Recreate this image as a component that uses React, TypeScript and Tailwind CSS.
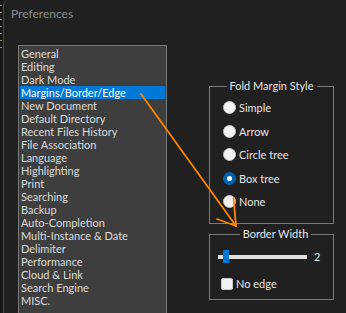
import React from 'react';

const PAGES = [
  'General',
  'Editing',
  'Dark Mode',
  'Margins/Border/Edge',
  'New Document',
  'Default Directory',
  'Recent Files History',
  'File Association',
  'Language',
  'Highlighting',
  'Print',
  'Searching',
  'Backup',
  'Auto-Completion',
  'Multi-Instance & Date',
  'Delimiter',
  'Performance',
  'Cloud & Link',
  'Search Engine',
  'MISC.',
];

const FOLD_STYLES = ['Simple', 'Arrow', 'Circle tree', 'Box tree', 'None'];

const Radio: React.FC<{ label: string; checked?: boolean }> = ({ label, checked }) => (
  <label className="flex items-center h-[13px] gap-[3px]">
    {checked ? (
      <span className="w-[13px] h-[13px] rounded-full bg-[#0063b1] flex items-center justify-center">
        <span className="w-[5px] h-[5px] rounded-full bg-white" />
      </span>
    ) : (
      <span className="w-[13px] h-[13px] rounded-full bg-[#f2f2f2] border border-[#c8c8c8]" />
    )}
    <span className="leading-[13px]">{label}</span>
  </label>
);

const App: React.FC = () => {
  const selected = 3;

  return (
    <div
      className="w-[346px] h-[313px] bg-[#202020] flex overflow-hidden relative text-[11px] text-[#e6e6e6]"
      style={{ fontFamily: 'Lato, "Liberation Sans", sans-serif' }}
    >
      {/* window behind */}
      <div className="w-[3px] h-full shrink-0 bg-[#171717] flex flex-col gap-[6px] pt-[5px]">
        {[0, 1, 2, 3, 4, 5, 6].map(i => (
          <span key={i} className="w-[2px] h-[1px] bg-[#a08860]" />
        ))}
      </div>

      {/* dialog */}
      <div className="flex-1 flex flex-col border-l border-[#4a4a4a] rounded-tl-[6px]">
        <div className="h-[28px] shrink-0 pl-[7px] pt-[6px] text-[#8c8c8c] text-[12px] leading-[16px]">Preferences</div>

        <div className="flex mt-[17px] shrink-0">
          {/* page list */}
          <div className="ml-[14px] w-[149px] shrink-0 border border-[#7a7a7a] bg-[#3e3e3e] p-[1px] h-[300px]">
            {PAGES.map((p, i) => (
              <div
                key={p}
                className={`h-[13px] leading-[13px] pl-[1px] whitespace-nowrap ${
                  i === selected ? 'bg-[#0078d7] text-white' : 'text-[#dcdcdc]'
                }`}
              >
                {p}
              </div>
            ))}
          </div>

          {/* right side */}
          <div className="ml-[42px] w-[125px] shrink-0 flex flex-col mt-[33px]">
            <fieldset className="border border-[#7a7a7a] h-[146px] px-[13px]">
              <legend className="mx-auto px-[3px] leading-[16px] whitespace-nowrap text-[#e6e6e6]">Fold Margin Style</legend>
              <div className="flex flex-col gap-[10.5px] mt-[7px]">
                {FOLD_STYLES.map(s => (
                  <Radio key={s} label={s} checked={s === 'Box tree'} />
                ))}
              </div>
            </fieldset>

            <fieldset className="border border-[#7a7a7a] h-[74px] mt-[2px] pl-[8px]">
              <legend className="mx-auto px-[3px] leading-[16px] whitespace-nowrap text-[#e6e6e6]">Border Width</legend>
              <div className="flex items-center h-[13px] mt-[8px]">
                <div className="relative w-[89px] h-[4px] bg-[#e0e0e0]">
                  <span className="absolute left-[5px] top-[-5px] w-[6px] h-[13px] bg-[#0078d7]" />
                </div>
                <span className="ml-[7px] leading-[13px]">2</span>
              </div>
              <label className="flex items-center gap-[3px] mt-[15px] ml-[3px] h-[12px]">
                <span className="w-[12px] h-[12px] rounded-[2px] bg-[#f2f2f2] border border-[#c8c8c8]" />
                <span className="leading-[12px]">No edge</span>
              </label>
            </fieldset>
          </div>
        </div>
      </div>

      {/* annotation arrow */}
      <svg className="absolute inset-0 pointer-events-none" width="346" height="313" viewBox="0 0 346 313">
        <g stroke="#ff8400" strokeWidth="1.8" strokeLinecap="round" fill="none">
          <line x1="141" y1="94" x2="236" y2="226" />
          <line x1="217" y1="219" x2="236" y2="226" />
          <line x1="233.5" y1="198" x2="236" y2="226" />
        </g>
      </svg>
    </div>
  );
};

export default App;
